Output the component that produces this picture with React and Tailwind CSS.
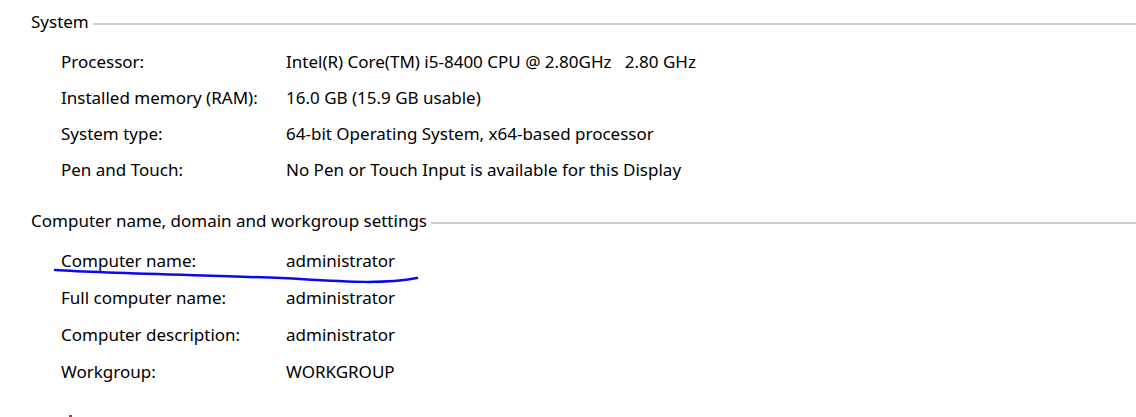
import React from 'react';

const font = { fontFamily: '"Noto Sans", "Open Sans", sans-serif' };

function Heading({ children, className }) {
    return (
        <div className={`flex items-center h-[24px] ${className}`}>
            <span className="whitespace-nowrap">{children}</span>
            <div className="flex-1 h-[2px] bg-[#cdcdcd] ml-[4px] mt-[3px]" />
        </div>
    );
}

function Row({ label, value, h }) {
    return (
        <div className={`grid grid-cols-[225px_1fr] items-center ${h}`}>
            <span className="whitespace-nowrap">{label}</span>
            <span className="whitespace-pre">{value}</span>
        </div>
    );
}

export default function App() {
    const system = [
        ['Processor:', 'Intel(R) Core(TM) i5-8400 CPU @ 2.80GHz   2.80 GHz'],
        ['Installed memory (RAM):', '16.0 GB (15.9 GB usable)'],
        ['System type:', '64-bit Operating System, x64-based processor'],
        ['Pen and Touch:', 'No Pen or Touch Input is available for this Display'],
    ];
    const computer = [
        ['Computer name:', 'administrator'],
        ['Full computer name:', 'administrator'],
        ['Computer description:', 'administrator'],
        ['Workgroup:', 'WORKGROUP'],
    ];
    return (
        <div className="relative w-full h-[417px] bg-white text-[#000] text-[17px] pl-[31px] pt-[10px] overflow-hidden" style={font}>
            <Heading>System</Heading>
            <div className="pl-[30px] mt-[10px]">
                {system.map(([l, v]) => <Row key={l} label={l} value={v} h="h-[36px]" />)}
            </div>
            <Heading className="mt-[21px]">Computer name, domain and workgroup settings</Heading>
            <div className="pl-[30px] mt-[9px]">
                {computer.map(([l, v]) => <Row key={l} label={l} value={v} h="h-[37px]" />)}
            </div>
            {/* pen annotation */}
            <svg className="absolute left-0 top-0 pointer-events-none" width="1136" height="417">
                <path d="M55 270 C 120 274 250 276 300 279 S 385 284 417 278" fill="none" stroke="#0a0af0" strokeWidth="2.5" strokeLinecap="round" />
                <rect x="69" y="415" width="3" height="2" fill="#c0392b" />
            </svg>
        </div>
    );
}
